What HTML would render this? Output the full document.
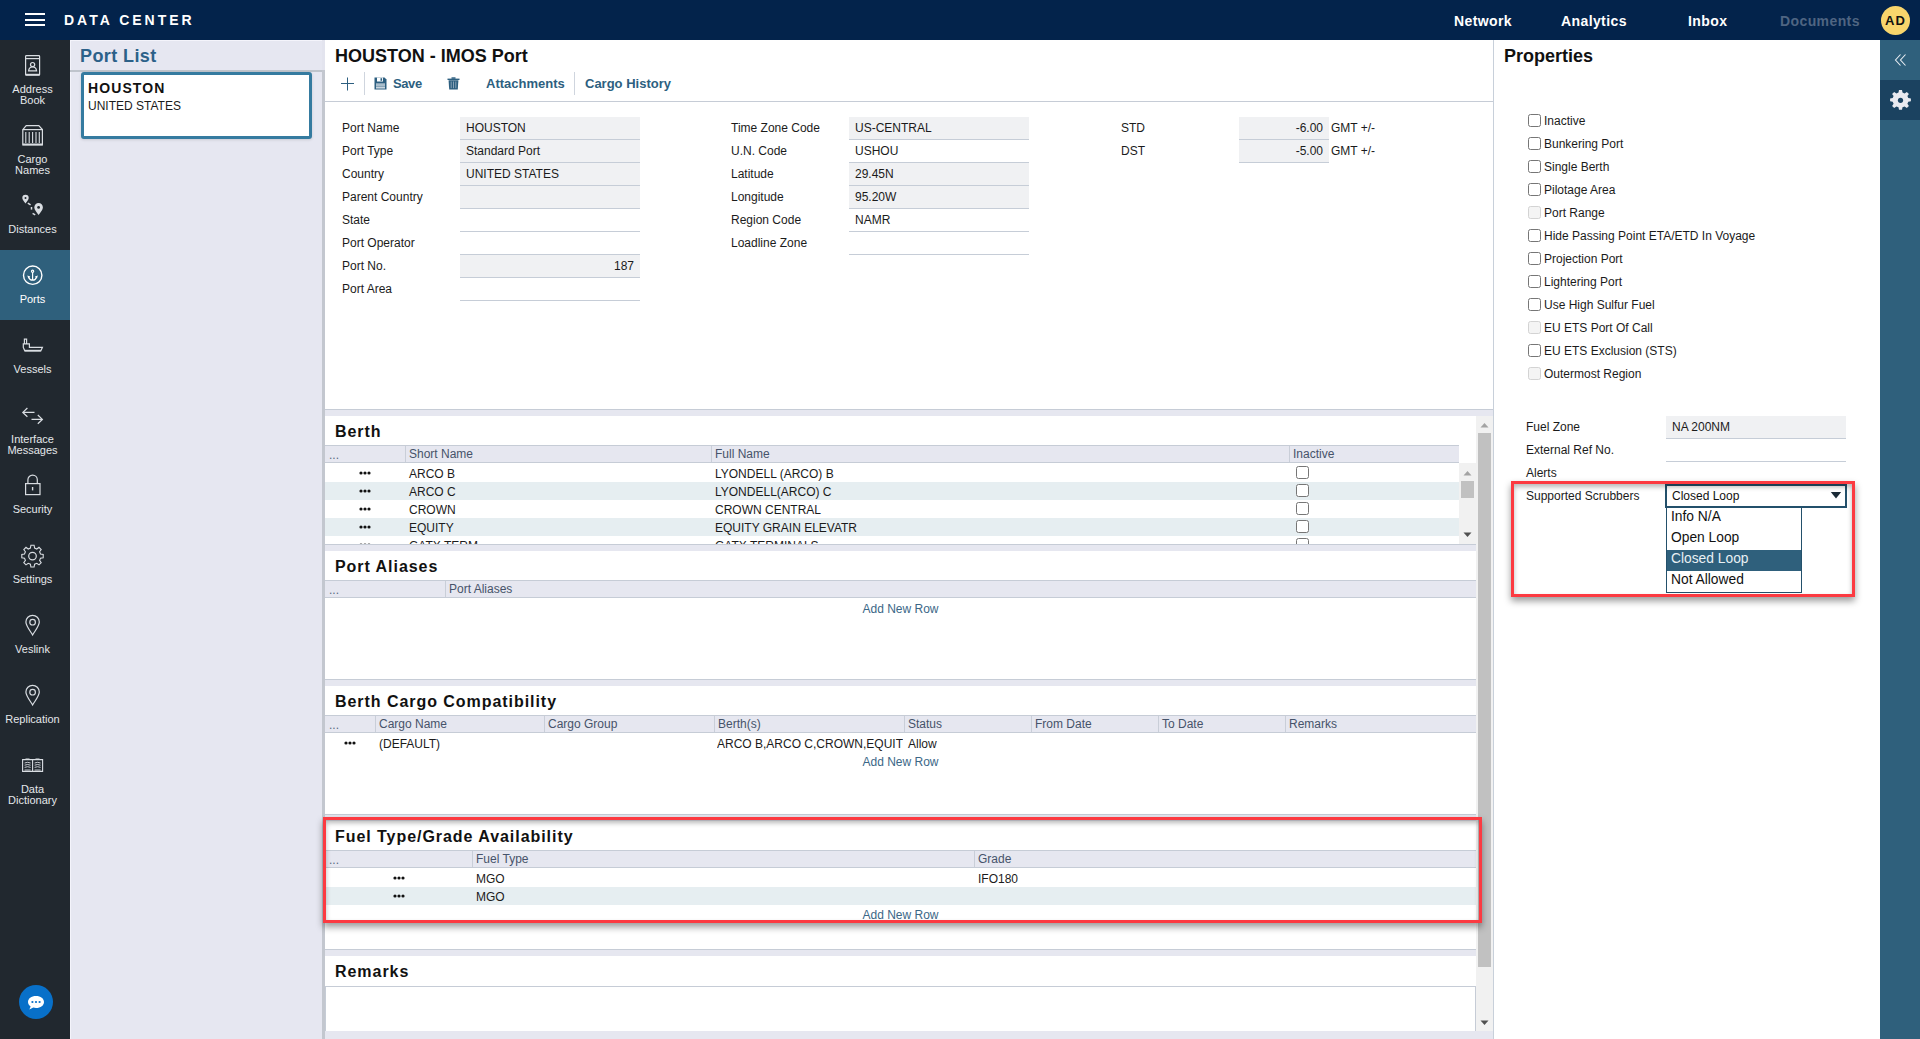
<!DOCTYPE html>
<html><head><meta charset="utf-8">
<style>
*{box-sizing:border-box;margin:0;padding:0}
html,body{width:1920px;height:1039px;overflow:hidden;background:#fff;font-family:"Liberation Sans",sans-serif;font-size:12px;color:#1b1b1b}
.a{position:absolute}
#top{left:0;top:0;width:1920px;height:40px;background:#03234b}
#side{left:0;top:40px;width:70px;height:999px;background:#21282f}
.si{position:absolute;left:0;width:70px;height:70px;color:#dfe2e6;font-size:11px;line-height:11px;text-align:center}
.si.sel{background:#2f607c;color:#fff}
.si svg{position:absolute}
.si .t{position:absolute;left:0;width:70px;text-align:center}
#plist{left:70px;top:40px;width:255px;height:999px;background:#e6e7f1}
#main{left:325px;top:40px;width:1168px;height:999px;background:#fff}
#props{left:1494px;top:40px;width:386px;height:999px;background:#fff}
#strip{left:1880px;top:40px;width:40px;height:999px;background:#2f607c}
.lbl{position:absolute;font-size:12px;line-height:14px;color:#1b1b1b;white-space:nowrap}
.inp{position:absolute;height:23px;border-bottom:1px solid #c6cdd7;font-size:12px;line-height:22px;padding-left:6px;color:#1b1b1b;white-space:nowrap}
.inp.g{background:#f0f1f3}
.inp.r{text-align:right;padding-right:6px}
.hd{position:absolute;font-weight:bold;font-size:16px;letter-spacing:0.95px;color:#111;white-space:nowrap}
.strp{position:absolute;left:0;width:1151px;height:7px;background:#e6e7f0;border-top:1px solid #c6ccd6}
.gh{position:absolute;left:0;height:18px;background:#e6e7f0;border-top:1px solid #c6ccd6;border-bottom:1px solid #c6ccd6}
.gh span{position:absolute;top:0;line-height:16px;font-size:12px;color:#46536a;white-space:nowrap}
.gh i{position:absolute;top:0;width:1px;height:16px;background:#c9ced8}
.row{position:absolute;left:0;height:18px;font-size:12px;line-height:18px;color:#1b1b1b;white-space:nowrap}
.row.alt{background:#e6eef1}
.row span{position:absolute;top:0}
.dots{position:absolute;top:7px;width:12px;height:4px}
.dots b{position:absolute;top:0;width:3.5px;height:3.5px;border-radius:50%;background:#111}
.anr{position:absolute;font-size:12px;line-height:18px;color:#3b6787;white-space:nowrap}
.cb{position:absolute;width:13px;height:13px;border:1px solid #767676;border-radius:2.5px;background:#fff}
.cb.dis{border-color:#d3d3d3;background:#f4f4f4}
.pl{position:absolute;font-size:12px;line-height:14px;color:#1b1b1b;white-space:nowrap}
</style></head><body>

<!-- TOP BAR -->
<div id="top" class="a">
  <div class="a" style="left:25px;top:13px;width:20px;height:2px;background:#fff"></div>
  <div class="a" style="left:25px;top:19px;width:20px;height:2px;background:#fff"></div>
  <div class="a" style="left:25px;top:24px;width:20px;height:2px;background:#fff"></div>
  <div class="a" style="left:64px;top:12px;font-weight:bold;font-size:14px;line-height:16px;letter-spacing:3px;color:#fff;white-space:nowrap">DATA CENTER</div>
  <div class="a" style="left:1454px;top:13px;font-weight:bold;font-size:14px;line-height:16px;letter-spacing:0.4px;color:#fff">Network</div>
  <div class="a" style="left:1561px;top:13px;font-weight:bold;font-size:14px;line-height:16px;letter-spacing:0.4px;color:#fff">Analytics</div>
  <div class="a" style="left:1688px;top:13px;font-weight:bold;font-size:14px;line-height:16px;letter-spacing:0.4px;color:#fff">Inbox</div>
  <div class="a" style="left:1780px;top:13px;font-weight:bold;font-size:14px;line-height:16px;letter-spacing:0.4px;color:#4f6582">Documents</div>
  <div class="a" style="left:1881px;top:6px;width:29px;height:29px;border-radius:50%;background:#f8d56c"></div>
  <div class="a" style="left:1885px;top:13px;font-weight:bold;font-size:13px;line-height:15px;letter-spacing:1px;color:#111">AD</div>
</div>

<!-- SIDEBAR -->
<div id="side" class="a">
</div>
<div class="a" style="left:0;top:250px;width:70px;height:70px;background:#2f607c"></div>
<svg class="a" style="left:0;top:0" width="70" height="1039" viewBox="0 0 70 1039" fill="none" stroke="#d9dde2" stroke-width="1.2">
  <!-- address book -->
  <rect x="25.6" y="55.6" width="14" height="19.6" rx="0.8"/>
  <line x1="25.6" y1="58.6" x2="39.6" y2="58.6"/>
  <circle cx="32.6" cy="64.6" r="2.1"/>
  <path d="M28.6,70.8 C29,67.8 31,66.8 32.6,66.8 C34.2,66.8 36.2,67.8 36.6,70.8 Z"/>
  <line x1="25.6" y1="74.6" x2="39.6" y2="74.6" stroke-width="1.6"/>
  <!-- cargo -->
  <path d="M22.8,145 V129.6 L26.2,125.6 H38.8 L42.4,129.6 V145 Z"/>
  <line x1="22.8" y1="129.6" x2="42.4" y2="129.6"/>
  <line x1="22.8" y1="144.4" x2="42.4" y2="144.4" stroke-width="1.8"/>
  <g stroke-width="1.1"><line x1="25.8" y1="132" x2="25.8" y2="143"/><line x1="29.2" y1="132" x2="29.2" y2="143"/><line x1="32.6" y1="132" x2="32.6" y2="143"/><line x1="36" y1="132" x2="36" y2="143"/><line x1="39.3" y1="132" x2="39.3" y2="143"/></g>
  <!-- distances -->
  <path d="M25.5,203.6 C24,201.2 22.3,199.6 22.3,197.9 A3.2,3.2 0 0 1 28.7,197.9 C28.7,199.6 27,201.2 25.5,203.6 Z" fill="#d9dde2" stroke="none"/>
  <circle cx="25.5" cy="197.9" r="1" fill="#21282f" stroke="none"/>
  <path d="M38.6,215 C36.6,211.8 34.3,209.8 34.3,207.4 A4.3,4.3 0 0 1 42.9,207.4 C42.9,209.8 40.6,211.8 38.6,215 Z" fill="#d9dde2" stroke="none"/>
  <circle cx="38.6" cy="207.4" r="1.4" fill="#21282f" stroke="none"/>
  <g stroke-width="1.5"><line x1="27.8" y1="203.2" x2="30.6" y2="204.8"/><line x1="31.5" y1="207" x2="31.5" y2="209.6"/><line x1="32.6" y1="213.4" x2="35.2" y2="214.8"/></g>
  <!-- ports anchor -->
  <circle cx="32.7" cy="275.2" r="9.2" stroke="#fff" stroke-width="1.4"/>
  <g stroke="#fff" stroke-width="1.2"><circle cx="32.6" cy="271.3" r="1.1"/><line x1="32.6" y1="272.5" x2="32.6" y2="280"/><path d="M28.6,277 Q29.6,280.2 32.6,280.2 Q35.6,280.2 36.6,277"/></g>
  <path d="M27.3,275.6 L30.3,276.6 L28.3,278.6 Z M37.9,275.6 L34.9,276.6 L36.9,278.6 Z" fill="#fff" stroke="none"/>
  <!-- vessels -->
  <path d="M24.4,344 V339.2 H26.6 V344 M23.3,347.4 V343.8 H29.4 V347.4 H42.4 L40.8,350.8 H24.8 Z" stroke-width="1.2"/>
  <line x1="24.8" y1="350.6" x2="40.8" y2="350.6" stroke-width="1.6"/>
  <!-- interface -->
  <path d="M34.5,412.4 H22.8 M27.4,408 L22.8,412.4 L27.4,416.8"/>
  <path d="M31.5,419.4 H42.4 M37.8,415 L42.4,419.4 L37.8,423.8"/>
  <!-- security -->
  <path d="M27.9,483 V479.8 A4.7,4.7 0 0 1 37.3,479.8 V483"/>
  <rect x="25.6" y="483.6" width="14.4" height="11" />
  <line x1="32.6" y1="487" x2="32.6" y2="490.4" stroke-width="1.4"/>
  <!-- settings gear -->
  <path id="gear" d="M30.9,545.2 H34.1 L34.6,548 L36.8,549 L39,547.3 L41.2,549.5 L39.6,551.8 L40.5,554 L43.2,554.5 V557.7 L40.5,558.2 L39.6,560.4 L41.2,562.7 L39,564.9 L36.8,563.3 L34.6,564.2 L34.1,567 H30.9 L30.4,564.2 L28.2,563.3 L26,564.9 L23.8,562.7 L25.4,560.4 L24.5,558.2 L21.8,557.7 V554.5 L24.5,554 L25.4,551.8 L23.8,549.5 L26,547.3 L28.2,549 L30.4,548 Z" stroke-width="1.1"/>
  <circle cx="32.5" cy="556.1" r="3.8"/>
  <!-- veslink pin -->
  <path d="M32.6,635 C29.5,630 25.9,625.5 25.9,622 A6.7,6.7 0 0 1 39.3,622 C39.3,625.5 35.7,630 32.6,635 Z"/>
  <circle cx="32.6" cy="622.2" r="2.8"/>
  <!-- replication pin -->
  <path d="M32.6,705 C29.5,700 25.9,695.5 25.9,692 A6.7,6.7 0 0 1 39.3,692 C39.3,695.5 35.7,700 32.6,705 Z"/>
  <circle cx="32.6" cy="692.2" r="2.8"/>
  <!-- data dictionary -->
  <path d="M22.6,771.4 V759.6 H32.6 V771.4 Z M32.6,771.4 V759.6 H42.6 V771.4 Z" stroke-width="1.1"/>
  <g stroke-width="0.9"><path d="M24.6,763 Q27.6,761.6 30.6,763 M24.6,765.2 Q27.6,763.8 30.6,765.2 M24.6,767.4 Q27.6,766 30.6,767.4 M24.6,770 H30.6"/><path d="M34.6,763 Q37.6,761.6 40.6,763 M34.6,765.2 Q37.6,763.8 40.6,765.2 M34.6,767.4 Q37.6,766 40.6,767.4 M34.6,770 H40.6"/></g>
  <path d="M25.5,759.2 H29.5 M35.5,759.2 H39.5" stroke-width="1.4"/>
</svg>
<div class="a" style="left:0;top:84px;width:65px;text-align:center;font-size:11px;line-height:11px;color:#e4e7ea">Address<br>Book</div>
<div class="a" style="left:0;top:154px;width:65px;text-align:center;font-size:11px;line-height:11px;color:#e4e7ea">Cargo<br>Names</div>
<div class="a" style="left:0;top:224px;width:65px;text-align:center;font-size:11px;line-height:11px;color:#e4e7ea">Distances</div>
<div class="a" style="left:0;top:294px;width:65px;text-align:center;font-size:11px;line-height:11px;color:#fff">Ports</div>
<div class="a" style="left:0;top:364px;width:65px;text-align:center;font-size:11px;line-height:11px;color:#e4e7ea">Vessels</div>
<div class="a" style="left:0;top:434px;width:65px;text-align:center;font-size:11px;line-height:11px;color:#e4e7ea">Interface<br>Messages</div>
<div class="a" style="left:0;top:504px;width:65px;text-align:center;font-size:11px;line-height:11px;color:#e4e7ea">Security</div>
<div class="a" style="left:0;top:574px;width:65px;text-align:center;font-size:11px;line-height:11px;color:#e4e7ea">Settings</div>
<div class="a" style="left:0;top:644px;width:65px;text-align:center;font-size:11px;line-height:11px;color:#e4e7ea">Veslink</div>
<div class="a" style="left:0;top:714px;width:65px;text-align:center;font-size:11px;line-height:11px;color:#e4e7ea">Replication</div>
<div class="a" style="left:0;top:784px;width:65px;text-align:center;font-size:11px;line-height:11px;color:#e4e7ea">Data<br>Dictionary</div>
<div class="a" style="left:19px;top:985px;width:34px;height:34px;border-radius:50%;background:#0870c9"></div>
<svg class="a" style="left:19px;top:985px" width="34" height="34" viewBox="0 0 34 34">
  <path d="M17,11 C12.3,11 9,13.6 9,17 C9,18.9 10,20.4 11.6,21.5 L10.4,24.6 L14.3,22.6 C15.1,22.8 16,23 17,23 C21.7,23 25,20.4 25,17 C25,13.6 21.7,11 17,11 Z" fill="#fff"/>
  <circle cx="13.4" cy="17" r="1.1" fill="#0870c9"/><circle cx="17" cy="17" r="1.1" fill="#0870c9"/><circle cx="20.6" cy="17" r="1.1" fill="#0870c9"/>
</svg>

<!-- PORT LIST -->
<div id="plist" class="a">
  <div class="a" style="left:0;top:0;width:252px;height:1px;background:#f4f4fb"></div><div class="a" style="left:0;top:0;width:1px;height:999px;background:#f4f4fb"></div>
  <div class="a" style="left:10px;top:6px;font-weight:bold;font-size:18px;line-height:20px;letter-spacing:0.4px;color:#2c6189;white-space:nowrap">Port List</div>
  <div class="a" style="left:0;top:30px;width:252px;height:2px;background:#bfc4cc"></div>
  <div class="a" style="left:252px;top:0;width:3px;height:999px;background:#c3c7cf"></div>
  <div class="a" style="left:252px;top:0;width:3px;height:30px;background:#e3e4ee"></div>
  <div class="a" style="left:11px;top:32px;width:231px;height:67px;border:3px solid #357ba0;border-radius:3px;background:#fff;box-shadow:0 1px 3px rgba(0,0,0,0.12)"></div>
  <div class="a" style="left:18px;top:40px;font-weight:bold;font-size:14px;line-height:16px;letter-spacing:1.1px;color:#111;white-space:nowrap">HOUSTON</div>
  <div class="a" style="left:18px;top:59px;font-size:12px;line-height:14px;color:#1b1b1b;white-space:nowrap">UNITED STATES</div>
</div>

<!-- MAIN -->
<div id="main" class="a">
  <div class="a" style="left:10px;top:6px;font-weight:bold;font-size:18px;line-height:20px;color:#111;white-space:nowrap">HOUSTON - IMOS Port</div>
  <div class="a" style="left:0;top:61px;width:1168px;height:1px;background:#c6ccd6"></div>
  <svg class="a" style="left:15px;top:37px" width="14" height="14" viewBox="0 0 14 14"><path d="M7.5,0.5 V13.5 M1,6.5 H14" stroke="#2d5f80" stroke-width="1"/></svg>
  <div class="a" style="left:39px;top:32px;width:1px;height:23px;background:#cfd5de"></div>
  <svg class="a" style="left:49px;top:37px" width="13" height="13" viewBox="0 0 13 13"><path d="M0.5,0.5 H10.5 L12.5,2.5 V12.5 H0.5 Z" fill="#2d5f80"/><rect x="3" y="0.5" width="6" height="4" fill="#fff"/><rect x="6.5" y="1.2" width="1.6" height="2.6" fill="#2d5f80"/><rect x="2" y="6.5" width="9" height="5" fill="#dfe6ec"/><path d="M2,8 H11 M2,9.7 H11" stroke="#2d5f80" stroke-width="0.6"/></svg>
  <div class="a" style="left:68px;top:36px;font-weight:bold;font-size:13px;line-height:15px;letter-spacing:-0.4px;color:#2d5f80">Save</div>
  <svg class="a" style="left:122px;top:37px" width="13" height="13" viewBox="0 0 13 13"><rect x="0.5" y="1.6" width="12" height="1.4" fill="#2d5f80"/><rect x="4.5" y="0.3" width="4" height="1.5" fill="#2d5f80"/><path d="M1.6,3.2 H11.4 L10.8,12.6 H2.2 Z" fill="#2d5f80"/><path d="M4.2,4.5 V11.2 M6.5,4.5 V11.2 M8.8,4.5 V11.2" stroke="#9fb4c4" stroke-width="0.8"/></svg>
  <div class="a" style="left:161px;top:36px;font-weight:bold;font-size:13px;line-height:15px;color:#2d5f80;white-space:nowrap">Attachments</div>
  <div class="a" style="left:249px;top:32px;width:1px;height:23px;background:#cfd5de"></div>
  <div class="a" style="left:260px;top:36px;font-weight:bold;font-size:13px;line-height:15px;color:#2d5f80;white-space:nowrap">Cargo History</div>
<div class="lbl" style="left:17px;top:81px">Port Name</div>
<div class="inp g" style="left:135px;top:77px;width:180px">HOUSTON</div>
<div class="lbl" style="left:17px;top:104px">Port Type</div>
<div class="inp g" style="left:135px;top:100px;width:180px">Standard Port</div>
<div class="lbl" style="left:17px;top:127px">Country</div>
<div class="inp g" style="left:135px;top:123px;width:180px">UNITED STATES</div>
<div class="lbl" style="left:17px;top:150px">Parent Country</div>
<div class="inp g" style="left:135px;top:146px;width:180px"></div>
<div class="lbl" style="left:17px;top:173px">State</div>
<div class="inp" style="left:135px;top:169px;width:180px"></div>
<div class="lbl" style="left:17px;top:196px">Port Operator</div>
<div class="inp" style="left:135px;top:192px;width:180px"></div>
<div class="lbl" style="left:17px;top:219px">Port No.</div>
<div class="inp g r" style="left:135px;top:215px;width:180px">187</div>
<div class="lbl" style="left:17px;top:242px">Port Area</div>
<div class="inp" style="left:135px;top:238px;width:180px"></div>
<div class="lbl" style="left:406px;top:81px">Time Zone Code</div>
<div class="inp g" style="left:524px;top:77px;width:180px">US-CENTRAL</div>
<div class="lbl" style="left:406px;top:104px">U.N. Code</div>
<div class="inp" style="left:524px;top:100px;width:180px">USHOU</div>
<div class="lbl" style="left:406px;top:127px">Latitude</div>
<div class="inp g" style="left:524px;top:123px;width:180px">29.45N</div>
<div class="lbl" style="left:406px;top:150px">Longitude</div>
<div class="inp g" style="left:524px;top:146px;width:180px">95.20W</div>
<div class="lbl" style="left:406px;top:173px">Region Code</div>
<div class="inp" style="left:524px;top:169px;width:180px">NAMR</div>
<div class="lbl" style="left:406px;top:196px">Loadline Zone</div>
<div class="inp" style="left:524px;top:192px;width:180px"></div>
<div class="lbl" style="left:796px;top:81px">STD</div>
<div class="inp g r" style="left:914px;top:77px;width:90px">-6.00</div>
<div class="lbl" style="left:796px;top:104px">DST</div>
<div class="inp g r" style="left:914px;top:100px;width:90px">-5.00</div>
<div class="lbl" style="left:1006px;top:81px">GMT +/-</div>
<div class="lbl" style="left:1006px;top:104px">GMT +/-</div>
  <div class="a" style="left:0;top:369px;width:1168px;height:1px;background:#c6ccd6"></div>
  <div class="a" style="left:0;top:370px;width:1168px;height:6px;background:#e6e7f0"></div>
<div class="hd" style="left:10px;top:382px;line-height:20px">Berth</div>
<div class="gh" style="top:405px;width:1134px"><span style="left:4px;top:1px;color:#5a6a82">...</span><i style="left:80px"></i><span style="left:84px">Short Name</span><i style="left:386px"></i><span style="left:390px">Full Name</span><i style="left:964px"></i><span style="left:968px">Inactive</span></div>
<div class="a" style="left:0;top:423px;width:1134px;height:81px;overflow:hidden"><div class="a" style="left:0;top:-423px;width:1168px;height:999px"><svg class="a" style="left:33px;top:430px" width="14" height="6"><circle cx="3" cy="3" r="1.6" fill="#111"/><circle cx="7" cy="3" r="1.6" fill="#111"/><circle cx="11" cy="3" r="1.6" fill="#111"/></svg><div class="a" style="left:84px;top:424px;font-size:12px;line-height:20px;color:#1b1b1b;white-space:nowrap">ARCO B</div><div class="a" style="left:390px;top:424px;font-size:12px;line-height:20px;color:#1b1b1b;white-space:nowrap">LYONDELL (ARCO) B</div><div class="cb" style="left:971px;top:426px"></div><div class="a" style="left:0px;top:442px;width:1134px;height:18px;background:#e6eef1"></div><svg class="a" style="left:33px;top:448px" width="14" height="6"><circle cx="3" cy="3" r="1.6" fill="#111"/><circle cx="7" cy="3" r="1.6" fill="#111"/><circle cx="11" cy="3" r="1.6" fill="#111"/></svg><div class="a" style="left:84px;top:442px;font-size:12px;line-height:20px;color:#1b1b1b;white-space:nowrap">ARCO C</div><div class="a" style="left:390px;top:442px;font-size:12px;line-height:20px;color:#1b1b1b;white-space:nowrap">LYONDELL(ARCO) C</div><div class="cb" style="left:971px;top:444px"></div><svg class="a" style="left:33px;top:466px" width="14" height="6"><circle cx="3" cy="3" r="1.6" fill="#111"/><circle cx="7" cy="3" r="1.6" fill="#111"/><circle cx="11" cy="3" r="1.6" fill="#111"/></svg><div class="a" style="left:84px;top:460px;font-size:12px;line-height:20px;color:#1b1b1b;white-space:nowrap">CROWN</div><div class="a" style="left:390px;top:460px;font-size:12px;line-height:20px;color:#1b1b1b;white-space:nowrap">CROWN CENTRAL</div><div class="cb" style="left:971px;top:462px"></div><div class="a" style="left:0px;top:478px;width:1134px;height:18px;background:#e6eef1"></div><svg class="a" style="left:33px;top:484px" width="14" height="6"><circle cx="3" cy="3" r="1.6" fill="#111"/><circle cx="7" cy="3" r="1.6" fill="#111"/><circle cx="11" cy="3" r="1.6" fill="#111"/></svg><div class="a" style="left:84px;top:478px;font-size:12px;line-height:20px;color:#1b1b1b;white-space:nowrap">EQUITY</div><div class="a" style="left:390px;top:478px;font-size:12px;line-height:20px;color:#1b1b1b;white-space:nowrap">EQUITY GRAIN ELEVATR</div><div class="cb" style="left:971px;top:480px"></div><svg class="a" style="left:33px;top:502px" width="14" height="6"><circle cx="3" cy="3" r="1.6" fill="#111"/><circle cx="7" cy="3" r="1.6" fill="#111"/><circle cx="11" cy="3" r="1.6" fill="#111"/></svg><div class="a" style="left:84px;top:496px;font-size:12px;line-height:20px;color:#1b1b1b;white-space:nowrap">GATX TERM</div><div class="a" style="left:390px;top:496px;font-size:12px;line-height:20px;color:#1b1b1b;white-space:nowrap">GATX TERMINALS</div><div class="cb" style="left:971px;top:498px"></div></div></div>
<div class="a" style="left:1134px;top:423px;width:17px;height:81px;background:#f1f1f1"></div>
<div class="a" style="left:1136px;top:441px;width:13px;height:17px;background:#c1c1c1"></div>
<svg class="a" style="left:1134px;top:428px" width="17" height="10"><path d="M4.5,7.5 L8.5,3 L12.5,7.5 Z" fill="#a3a3a3"/></svg>
<svg class="a" style="left:1134px;top:490px" width="17" height="10"><path d="M4.5,2.5 L8.5,7 L12.5,2.5 Z" fill="#505050"/></svg>
<div class="a" style="left:0;top:504px;width:1151px;height:1px;background:#c6ccd6"></div><div class="a" style="left:0;top:505px;width:1151px;height:6px;background:#e6e7f0"></div>
<div class="hd" style="left:10px;top:517px;line-height:20px">Port Aliases</div>
<div class="gh" style="top:540px;width:1151px"><span style="left:4px;top:1px;color:#5a6a82">...</span><i style="left:120px"></i><span style="left:124px">Port Aliases</span></div>
<div class="a" style="left:0;top:559px;width:1151px;text-align:center;font-size:12px;line-height:20px;color:#3b6787">Add New Row</div>
<div class="a" style="left:0;top:639px;width:1151px;height:1px;background:#c6ccd6"></div><div class="a" style="left:0;top:640px;width:1151px;height:6px;background:#e6e7f0"></div>
<div class="hd" style="left:10px;top:652px;line-height:20px">Berth Cargo Compatibility</div>
<div class="gh" style="top:675px;width:1151px"><span style="left:4px;top:1px;color:#5a6a82">...</span><i style="left:50px"></i><span style="left:54px">Cargo Name</span><i style="left:219px"></i><span style="left:223px">Cargo Group</span><i style="left:389px"></i><span style="left:393px">Berth(s)</span><i style="left:579px"></i><span style="left:583px">Status</span><i style="left:706px"></i><span style="left:710px">From Date</span><i style="left:833px"></i><span style="left:837px">To Date</span><i style="left:960px"></i><span style="left:964px">Remarks</span></div>
<svg class="a" style="left:18px;top:700px" width="14" height="6"><circle cx="3" cy="3" r="1.6" fill="#111"/><circle cx="7" cy="3" r="1.6" fill="#111"/><circle cx="11" cy="3" r="1.6" fill="#111"/></svg>
<div class="a" style="left:54px;top:694px;font-size:12px;line-height:20px;color:#1b1b1b;white-space:nowrap">(DEFAULT)</div>
<div class="a" style="left:392px;top:694px;width:186px;overflow:hidden;font-size:12px;line-height:20px;white-space:nowrap">ARCO B,ARCO C,CROWN,EQUITY</div>
<div class="a" style="left:583px;top:694px;font-size:12px;line-height:20px;color:#1b1b1b;white-space:nowrap">Allow</div>
<div class="a" style="left:0;top:712px;width:1151px;text-align:center;font-size:12px;line-height:20px;color:#3b6787">Add New Row</div>
<div class="a" style="left:0;top:774px;width:1151px;height:1px;background:#c6ccd6"></div><div class="a" style="left:0;top:775px;width:1151px;height:6px;background:#e6e7f0"></div>
<div class="hd" style="left:10px;top:787px;line-height:20px">Fuel Type/Grade Availability</div>
<div class="gh" style="top:810px;width:1151px"><span style="left:4px;top:1px;color:#5a6a82">...</span><i style="left:147px"></i><span style="left:151px">Fuel Type</span><i style="left:649px"></i><span style="left:653px">Grade</span></div>
<svg class="a" style="left:67px;top:835px" width="14" height="6"><circle cx="3" cy="3" r="1.6" fill="#111"/><circle cx="7" cy="3" r="1.6" fill="#111"/><circle cx="11" cy="3" r="1.6" fill="#111"/></svg>
<div class="a" style="left:151px;top:829px;font-size:12px;line-height:20px;color:#1b1b1b;white-space:nowrap">MGO</div>
<div class="a" style="left:653px;top:829px;font-size:12px;line-height:20px;color:#1b1b1b;white-space:nowrap">IFO180</div>
<div class="a" style="left:0px;top:847px;width:1151px;height:18px;background:#e6eef1"></div>
<svg class="a" style="left:67px;top:853px" width="14" height="6"><circle cx="3" cy="3" r="1.6" fill="#111"/><circle cx="7" cy="3" r="1.6" fill="#111"/><circle cx="11" cy="3" r="1.6" fill="#111"/></svg>
<div class="a" style="left:151px;top:847px;font-size:12px;line-height:20px;color:#1b1b1b;white-space:nowrap">MGO</div>
<div class="a" style="left:0;top:865px;width:1151px;text-align:center;font-size:12px;line-height:20px;color:#3b6787">Add New Row</div>
<div class="a" style="left:0;top:909px;width:1151px;height:1px;background:#c6ccd6"></div><div class="a" style="left:0;top:910px;width:1151px;height:6px;background:#e6e7f0"></div>
<div class="hd" style="left:10px;top:922px;line-height:20px">Remarks</div>
<div class="a" style="left:0;top:946px;width:1151px;height:46px;border:1px solid #c6ccd6;border-bottom:none;background:#fff"></div>
<div class="a" style="left:0;top:991px;width:1168px;height:8px;background:#e6e7f0"></div>
<div class="a" style="left:1151px;top:376px;width:17px;height:615px;background:#f1f1f1"></div>
<div class="a" style="left:1153px;top:393px;width:13px;height:534px;background:#c1c1c1"></div>
<svg class="a" style="left:1151px;top:380px" width="17" height="10"><path d="M4.5,7.5 L8.5,3 L12.5,7.5 Z" fill="#a3a3a3"/></svg>
<svg class="a" style="left:1151px;top:977.5px" width="17" height="10"><path d="M4.5,2.5 L8.5,7 L12.5,2.5 Z" fill="#505050"/></svg>
<div class="a" style="left:-2px;top:777px;width:1159px;height:106px;border:3px solid #fc3a41;box-shadow:0 4px 7px rgba(0,0,0,0.4), inset 0 3px 5px rgba(0,0,0,0.28)"></div>
  <div class="a" style="left:1168px;top:0;width:1px;height:999px;background:#c8d0da"></div>
</div>

<!-- PROPERTIES -->
<div id="props" class="a">
<div class="a" style="left:10px;top:6px;font-weight:bold;font-size:18px;line-height:20px;color:#111;white-space:nowrap">Properties</div>
<div class="cb" style="left:34px;top:74px"></div>
<div class="pl" style="left:50px;top:74px">Inactive</div>
<div class="cb" style="left:34px;top:97px"></div>
<div class="pl" style="left:50px;top:97px">Bunkering Port</div>
<div class="cb" style="left:34px;top:120px"></div>
<div class="pl" style="left:50px;top:120px">Single Berth</div>
<div class="cb" style="left:34px;top:143px"></div>
<div class="pl" style="left:50px;top:143px">Pilotage Area</div>
<div class="cb dis" style="left:34px;top:166px"></div>
<div class="pl" style="left:50px;top:166px">Port Range</div>
<div class="cb" style="left:34px;top:189px"></div>
<div class="pl" style="left:50px;top:189px">Hide Passing Point ETA/ETD In Voyage</div>
<div class="cb" style="left:34px;top:212px"></div>
<div class="pl" style="left:50px;top:212px">Projection Port</div>
<div class="cb" style="left:34px;top:235px"></div>
<div class="pl" style="left:50px;top:235px">Lightering Port</div>
<div class="cb" style="left:34px;top:258px"></div>
<div class="pl" style="left:50px;top:258px">Use High Sulfur Fuel</div>
<div class="cb dis" style="left:34px;top:281px"></div>
<div class="pl" style="left:50px;top:281px">EU ETS Port Of Call</div>
<div class="cb" style="left:34px;top:304px"></div>
<div class="pl" style="left:50px;top:304px">EU ETS Exclusion (STS)</div>
<div class="cb dis" style="left:34px;top:327px"></div>
<div class="pl" style="left:50px;top:327px">Outermost Region</div>
<div class="lbl" style="left:32px;top:380px">Fuel Zone</div>
<div class="inp g" style="left:172px;top:376px;width:180px">NA 200NM</div>
<div class="lbl" style="left:32px;top:403px">External Ref No.</div>
<div class="inp" style="left:172px;top:399px;width:180px"></div>
<div class="lbl" style="left:32px;top:426px">Alerts</div>
<div class="lbl" style="left:32px;top:449px">Supported Scrubbers</div>
<div class="a" style="left:171px;top:444px;width:182px;height:24px;border:2px solid #23506b;background:#fff"></div>
<div class="a" style="left:178px;top:449px;font-size:12px;line-height:14px;color:#111;white-space:nowrap">Closed Loop</div>
<svg class="a" style="left:336px;top:451px" width="12" height="8"><path d="M0.8,1 H11.2 L6,7.4 Z" fill="#1a2a36"/></svg>
<div class="a" style="left:172px;top:468px;width:136px;height:85px;border:1px solid #23506b;border-top:none;background:#fff"></div>
<div class="a" style="left:173px;top:510px;width:134px;height:21px;background:#2f607c"></div>
<div class="a" style="left:177px;top:465.5px;font-size:13.8px;line-height:21px;color:#111;white-space:nowrap">Info N/A</div>
<div class="a" style="left:177px;top:486.5px;font-size:13.8px;line-height:21px;color:#111;white-space:nowrap">Open Loop</div>
<div class="a" style="left:177px;top:507.5px;font-size:13.8px;line-height:21px;color:#e9f0f4;white-space:nowrap">Closed Loop</div>
<div class="a" style="left:177px;top:528.5px;font-size:13.8px;line-height:21px;color:#111;white-space:nowrap">Not Allowed</div>
<div class="a" style="left:17px;top:441px;width:344px;height:116px;border:3px solid #fc3a41;box-shadow:0 4px 7px rgba(0,0,0,0.4), inset 0 3px 5px rgba(0,0,0,0.28)"></div>
</div>

<!-- RIGHT STRIP -->
<div id="strip" class="a">
  <svg class="a" style="left:14px;top:13px" width="14" height="14" viewBox="0 0 14 14"><path d="M6.5,1.5 L1.5,7 L6.5,12.5 M11.5,1.5 L6.5,7 L11.5,12.5" fill="none" stroke="#e8edf2" stroke-width="1.1"/></svg>
  <div class="a" style="left:0;top:40px;width:40px;height:40px;background:#1b4260"></div>
  <svg class="a" style="left:10px;top:50px" width="21" height="21" viewBox="0 0 21 21"><path d="M9,1 H12 L12.5,3.6 L14.6,4.5 L16.8,3 L18.9,5.1 L17.4,7.3 L18.3,9.4 L20.9,9.9 V12.9 L18.3,13.4 L17.4,15.5 L18.9,17.7 L16.8,19.8 L14.6,18.3 L12.5,19.2 L12,21.8 H9 L8.5,19.2 L6.4,18.3 L4.2,19.8 L2.1,17.7 L3.6,15.5 L2.7,13.4 L0.1,12.9 V9.9 L2.7,9.4 L3.6,7.3 L2.1,5.1 L4.2,3 L6.4,4.5 L8.5,3.6 Z" transform="translate(0,-0.9) scale(1,0.95)" fill="#e9e9ef"/><circle cx="10.5" cy="10.3" r="2.6" fill="#1b4260"/></svg>
</div>

</body></html>
